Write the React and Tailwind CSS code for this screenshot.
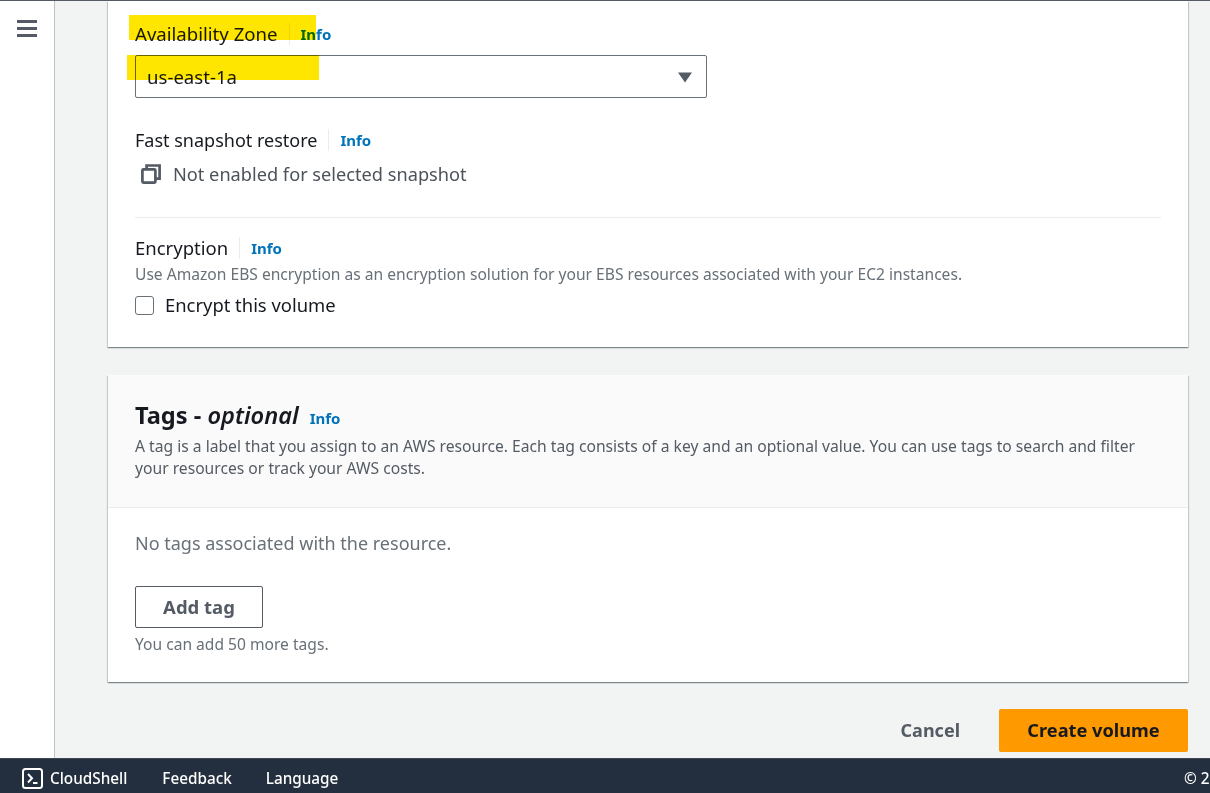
function Info() {
  return <a className="text-[15px] leading-5 font-bold text-[#0073bb]">Info</a>;
}

function Label({ children, size = "text-[18px]" }) {
  return (
    <div className="flex items-center gap-[11px]">
      <span className={`${size} leading-6 text-[#16191f]`}>{children}</span>
      <span className="w-px h-[22px] bg-[#eaeded]" />
    </div>
  );
}

const cardShadow = "shadow-[0_1px_1px_0_rgba(0,28,36,0.3),1px_1px_1px_0_rgba(0,28,36,0.15),-1px_1px_1px_0_rgba(0,28,36,0.15)]";

export default function App() {
  return (
    <div style={{ fontFamily: '"Noto Sans",sans-serif' }} className="relative flex flex-col w-[1210px] h-[793px] overflow-hidden bg-white">
      <div className="flex flex-1 min-h-0 border-t border-[#545b64]">
        <aside className="w-[55px] shrink-0 bg-white border-r border-[#bcc3c3] pl-[17px] pt-[19px]">
          <div className="flex flex-col gap-[4.5px] w-5">
            <span className="h-[2.5px] bg-[#545b64]" />
            <span className="h-[2.5px] bg-[#545b64]" />
            <span className="h-[2.5px] bg-[#545b64]" />
          </div>
        </aside>
        <main className="flex-1 bg-[#f2f3f3] pl-[53px] pr-[22px] flex flex-col">
          <section className={`h-[346px] bg-white px-[27px] pt-[21px] ${cardShadow}`}>
            <div className="flex items-center gap-[11px]">
              <Label size="text-[18.6px]">Availability Zone</Label>
              <Info />
            </div>
            <div className="mt-[9px] w-[572px] h-[43px] border border-[#687078] rounded-[2px] flex items-center justify-between pl-[11px] pr-[13px]">
              <span className="text-[18.6px] text-[#16191f]">us-east-1a</span>
              <svg width="16" height="12" viewBox="0 0 16 12"><path d="M1 1.5h14L8 11.5z" fill="#545b64" /></svg>
            </div>
            <div className="mt-[30px] flex items-center gap-[11px]">
              <Label>Fast snapshot restore</Label>
              <Info />
            </div>
            <div className="mt-[10px] flex items-center pl-[6px] gap-[12px]">
              <svg width="20" height="20" viewBox="0 0 20 20" fill="none" stroke="#545b64" strokeWidth="2.7">
                <rect x="1.4" y="5.4" width="13" height="13.2" rx="1" />
                <path d="M5.6 4.8V1.5H18.6V14.6H14.5" />
              </svg>
              <span className="text-[18.2px] leading-6 text-[#4b5259]">Not enabled for selected snapshot</span>
            </div>
            <div className="mt-[31px] h-px bg-[#eaeded]" />
            <div className="mt-[18px] flex items-center gap-[11px]">
              <Label size="text-[18.5px]">Encryption</Label>
              <Info />
            </div>
            <p className="text-[15.6px] leading-5 text-[#687078] mt-[4px]">
              Use Amazon EBS encryption as an encryption solution for your EBS resources associated with your EC2 instances.
            </p>
            <label className="mt-[9px] flex items-center gap-[11px]">
              <span className="w-[19px] h-[19px] rounded-[3px] border-[1.5px] border-[#687078] bg-white" />
              <span className="text-[18.4px] leading-6 text-[#16191f]">Encrypt this volume</span>
            </label>
          </section>

          <section className={`mt-[28px] h-[307px] bg-white ${cardShadow}`}>
            <header className="h-[133px] bg-[#fafafa] border-b border-[#eaeded] px-[27px] pt-[24px]">
              <div className="flex items-baseline gap-[11px]">
                <h2 className="text-[23.6px] leading-8 font-bold text-[#16191f]">
                  Tags - <em className="font-semibold">optional</em>
                </h2>
                <Info />
              </div>
              <p className="mt-[4px] text-[15.66px] leading-[22px] text-[#545b64] max-w-[1026px]">
                A tag is a label that you assign to an AWS resource. Each tag consists of a key and an optional value. You can use tags to search and filter your resources or track your AWS costs.
              </p>
            </header>
            <div className="px-[27px] pt-[23px]">
              <p className="text-[18px] leading-6 text-[#687078]">No tags associated with the resource.</p>
              <button className="mt-[31px] w-[128px] h-[42px] border border-[#545b64] rounded-[2px] bg-white text-[18.5px] font-bold text-[#545b64]">
                Add tag
              </button>
              <p className="mt-[6px] text-[15.6px] leading-5 text-[#687078]">You can add 50 more tags.</p>
            </div>
          </section>

          <div className="mt-[27px] flex items-center justify-end gap-[39px]">
            <button className="text-[18px] font-bold text-[#545b64]">Cancel</button>
            <button className="w-[189px] h-[43px] rounded-[2px] bg-[#ff9900] text-[18.2px] font-bold text-[#16191f]">
              Create volume
            </button>
          </div>
        </main>
      </div>

      <footer className="h-[35px] shrink-0 bg-[#232f3e] border-t border-[#414750] flex items-center text-white text-[15.3px] font-medium pl-[22px] pt-[5px] overflow-hidden">
        <svg width="21" height="21" viewBox="0 0 21 21" fill="none" className="mr-[7px]">
          <rect x="1" y="1" width="19" height="19" rx="2.5" stroke="white" strokeWidth="2" />
          <path d="M6 6l4 4.2L6 14.5" stroke="white" strokeWidth="2" />
          <path d="M11 15h4.5" stroke="white" strokeWidth="2" />
        </svg>
        <span>CloudShell</span>
        <span className="ml-[35px]">Feedback</span>
        <span className="ml-[34px]">Language</span>
        <span className="ml-auto whitespace-nowrap w-[26px] shrink-0">© 2</span>
      </footer>

      <div className="absolute left-[129px] top-[15px] w-[187px] h-[25px] bg-[#ffe600] mix-blend-multiply" />
      <div className="absolute left-[127px] top-[55px] w-[192px] h-[25px] bg-[#ffe600] mix-blend-multiply" />
    </div>
  );
}
